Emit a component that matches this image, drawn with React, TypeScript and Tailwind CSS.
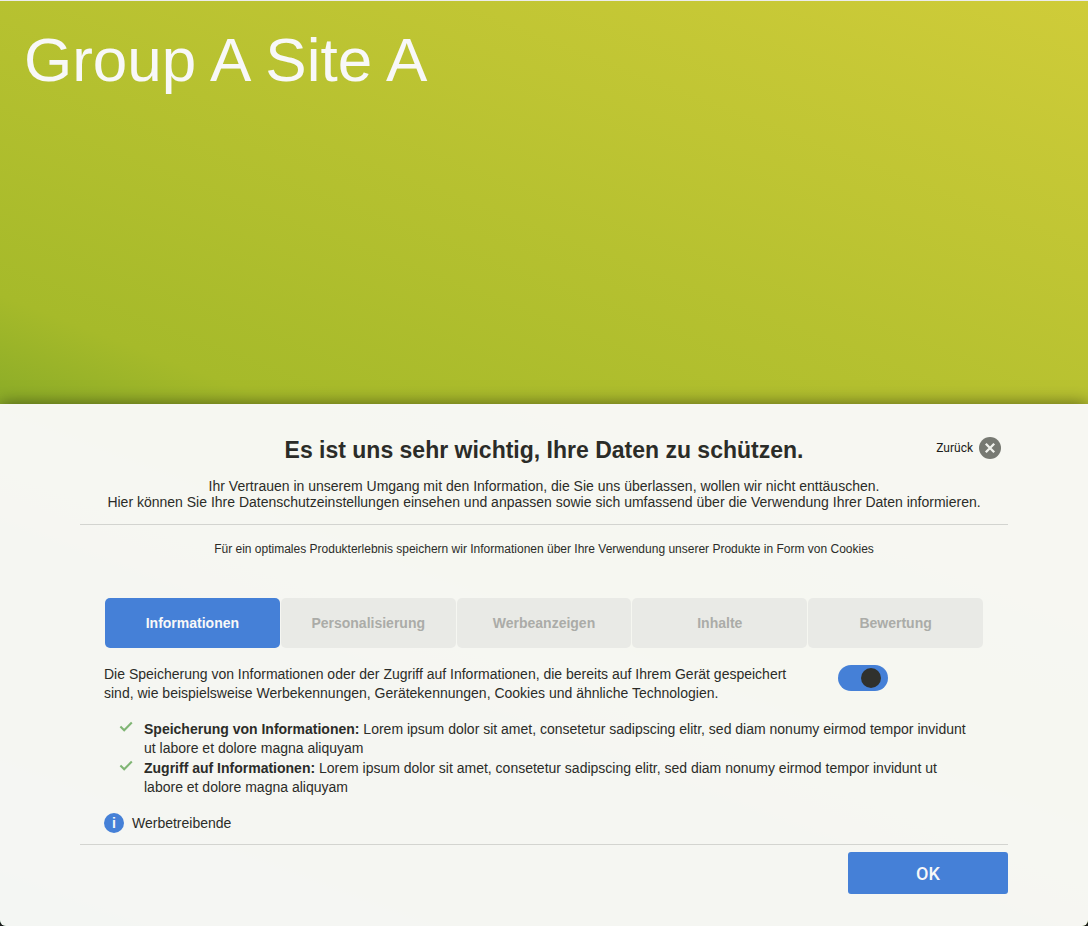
import { useState } from "react";

const tabs = ["Informationen", "Personalisierung", "Werbeanzeigen", "Inhalte", "Bewertung"];

const purposes = [
  {
    title: "Speicherung von Informationen:",
    text: "Lorem ipsum dolor sit amet, consetetur sadipscing elitr, sed diam nonumy eirmod tempor invidunt ut labore et dolore magna aliquyam",
  },
  {
    title: "Zugriff auf Informationen:",
    text: "Lorem ipsum dolor sit amet, consetetur sadipscing elitr, sed diam nonumy eirmod tempor invidunt ut labore et dolore magna aliquyam",
  },
];

function Check() {
  return (
    <svg viewBox="0 0 14 12" className="mt-px h-3 w-3.5 shrink-0" fill="none" stroke="#7fb574" strokeWidth="2.1" aria-hidden="true">
      <path d="M1.4 5.4 5.2 9.2 12.8 1.6" />
    </svg>
  );
}

export default function App() {
  const [active, setActive] = useState(0);
  const [enabled, setEnabled] = useState(true);

  return (
    <div className="min-h-screen bg-[#1c1c1c] font-['Liberation_Sans',Arial,sans-serif] text-[#2b2c28]">
      <div className="flex min-h-screen flex-col overflow-hidden rounded-b-md border-t border-[#ececec] bg-[linear-gradient(201deg,#cfcc39_0%,#a6ba2a_53%,#8fae28_60%,#4f9a6a_100%)]">
        <header className="px-6 pt-[22px]">
          <h1 className="text-[62px] leading-[74px] text-[#f8f8f8]">Group A Site A</h1>
        </header>

        <section
          role="dialog"
          aria-labelledby="privacy-title"
          className="mt-auto bg-[#f8f8f6]/98 px-20 pt-8 pb-8 shadow-[0_0_16px_rgba(0,0,0,0.5)]"
        >
          <div className="grid grid-cols-[1fr_auto_1fr] items-start">
            <h2 id="privacy-title" className="col-start-2 text-[23px] leading-7 font-bold">
              Es ist uns sehr wichtig, Ihre Daten zu schützen.
            </h2>
            <button
              type="button"
              className="mt-px mr-[7px] flex items-center gap-1.5 justify-self-end font-[Roboto,sans-serif] text-xs leading-[22px] text-[#1c1c1a]"
            >
              Zurück
              <svg viewBox="0 0 22 22" className="size-[22px]" aria-hidden="true">
                <circle cx="11" cy="11" r="11" fill="#777972" />
                <path d="M6.8 6.8l8.4 8.4M15.2 6.8l-8.4 8.4" stroke="#f1f2ed" strokeWidth="2.3" />
              </svg>
            </button>
          </div>

          <p className="mt-3.5 border-b border-[#d3d4d0] pb-3.5 text-center text-sm leading-4">
            Ihr Vertrauen in unserem Umgang mit den Information, die Sie uns überlassen, wollen wir nicht enttäuschen.
            <br />
            Hier können Sie Ihre Datenschutzeinstellungen einsehen und anpassen sowie sich umfassend über die Verwendung
            Ihrer Daten informieren.
          </p>

          <p className="mt-4 text-center text-xs leading-4">
            Für ein optimales Produkterlebnis speichern wir Informationen über Ihre Verwendung unserer Produkte in Form
            von Cookies
          </p>

          <div className="border-b border-[#d3d4d0] pt-[41px] pr-6 pb-[11px] pl-6">
            <div role="tablist" className="grid grid-cols-5 gap-px px-px">
              {tabs.map((tab, index) => (
                <button
                  key={tab}
                  type="button"
                  role="tab"
                  aria-selected={index === active}
                  onClick={() => setActive(index)}
                  className={
                    index === active
                      ? "h-[50px] rounded-[5px] bg-[#4580d7] text-sm font-bold text-[#f8f8f8]"
                      : "h-[50px] rounded-[5px] bg-[#e9eae6] text-sm font-bold text-[#abaca8]"
                  }
                >
                  {tab}
                </button>
              ))}
            </div>

            <div className="mt-[17px] flex items-start justify-between pr-24">
              <p id="storage-text" className="max-w-[702px] text-sm leading-[19px]">
                Die Speicherung von Informationen oder der Zugriff auf Informationen, die bereits auf Ihrem Gerät
                gespeichert sind, wie beispielsweise Werbekennungen, Gerätekennungen, Cookies und ähnliche Technologien.
              </p>
              <label className="relative block h-[26px] w-[50px] shrink-0 cursor-pointer">
                <input
                  type="checkbox"
                  role="switch"
                  aria-labelledby="storage-text"
                  checked={enabled}
                  onChange={(event) => setEnabled(event.target.checked)}
                  className="peer block h-[26px] w-[50px] appearance-none rounded-full bg-[#babbb7] checked:bg-[#4580d7]"
                />
                <span className="pointer-events-none absolute top-[3px] left-[7px] size-5 rounded-full bg-[#30312d] peer-checked:left-[23px]" />
              </label>
            </div>

            <ul className="mt-[17px] pl-[15px]">
              {purposes.map((purpose) => (
                <li key={purpose.title} className="flex items-start gap-[11px] text-sm leading-[19px] not-first:mt-px">
                  <Check />
                  <p className="max-w-[832px]">
                    <strong>{purpose.title}</strong> {purpose.text}
                  </p>
                </li>
              ))}
            </ul>

            <button type="button" className="mt-4 flex items-center gap-2 text-sm leading-5">
              <span className="flex size-5 items-center justify-center rounded-full bg-[#4580d7] text-sm font-bold text-[#f8f8f8]">
                i
              </span>
              Werbetreibende
            </button>
          </div>

          <div className="mt-[7px] flex justify-end">
            <button
              type="button"
              className="h-[42px] w-40 rounded-[3px] bg-[#4580d7] pt-0.5 font-[Roboto,sans-serif] text-lg font-medium text-[#f8f8f8]"
            >
              OK
            </button>
          </div>
        </section>
      </div>
    </div>
  );
}
